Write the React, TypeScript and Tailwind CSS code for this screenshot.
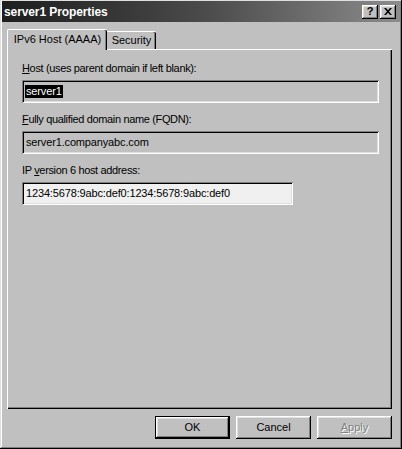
import React from "react";

const raised =
  "shadow-[inset_-1px_-1px_0_#000000,inset_1px_1px_0_#ffffff,inset_-2px_-2px_0_#808080,inset_2px_2px_0_#dfdfdf]";
const sunken =
  "shadow-[inset_1px_1px_0_#808080,inset_-1px_-1px_0_#ffffff,inset_2px_2px_0_#000000,inset_-2px_-2px_0_#dfdfdf]";

function Field({
  label,
  value,
  width,
  white,
  selected,
}: {
  label: React.ReactNode;
  value: string;
  width: string;
  white?: boolean;
  selected?: boolean;
}) {
  return (
    <div className="flex flex-col">
      <div className="h-[13px] leading-[13px] text-[11px] tracking-[-0.35px] text-black">{label}</div>
      <div
        className={`mt-[5px] h-[23px] ${width} ${sunken} ${
          white ? "bg-[#f0f0f0]" : "bg-[#c0c0c0]"
        } flex items-center pl-[3px]`}
      >
        <span
          className={`h-[13px] leading-[13px] text-[11px] tracking-[-0.15px] px-[1px] ${
            selected ? "bg-black text-white" : "text-black"
          }`}
        >
          {value}
        </span>
      </div>
    </div>
  );
}

export default function App() {
  return (
    <div
      className="w-[402px] h-[449px] bg-[#c0c0c0] flex flex-col shadow-[inset_-1px_-1px_0_#000000,inset_1px_1px_0_#dfdfdf,inset_-2px_-2px_0_#808080,inset_2px_2px_0_#ffffff]"
      style={{ fontFamily: '"Liberation Sans", Arial, sans-serif' }}
    >
      {/* Title bar */}
      <div className="mx-[2px] mt-[1px] h-[21px] flex items-center justify-between pl-[2px] pr-[4px] bg-gradient-to-r from-[#1e1e1e] via-[#4a4a4a] to-[#8c8c8c]">
        <span className="text-white font-bold text-[12px] leading-[14px] tracking-[-0.1px]">
          server1 Properties
        </span>
        <div className="flex gap-[2px]">
          <div
            className={`w-[16px] h-[14px] bg-[#c0c0c0] ${raised} flex items-center justify-center text-[11px] font-bold leading-none text-black`}
          >
            ?
          </div>
          <div
            className={`w-[16px] h-[14px] bg-[#c0c0c0] ${raised} flex items-center justify-center`}
          >
            <svg width="8" height="7" viewBox="0 0 8 7">
              <path d="M0 0h2l2 2.2L6 0h2L5 3.5 8 7H6L4 4.8 2 7H0l3-3.5z" fill="#000" />
            </svg>
          </div>
        </div>
      </div>

      {/* Body */}
      <div className="pl-[7px] pt-[6px] flex flex-col">
        {/* Tabs */}
        <div className="flex items-end h-[21px] relative z-10">
          <div className="h-[21px] w-[100px] bg-[#c0c0c0] border-l border-t border-white rounded-tl-[2px] rounded-tr-[2px] shadow-[inset_-1px_0_0_#000000,inset_-2px_0_0_#808080] flex items-center justify-center text-[11px] text-black -mb-[1px] pb-[1px]">
            IPv6 Host (AAAA)
          </div>
          <div className="h-[18px] w-[49px] bg-[#c0c0c0] border-t border-white rounded-tr-[2px] shadow-[inset_-1px_0_0_#000000,inset_-2px_0_0_#808080] flex items-center justify-center text-[11px] text-black">
            Security
          </div>
        </div>
        {/* Panel */}
        <div className="w-[385px] h-[360px] bg-[#c0c0c0] border-l border-t border-white shadow-[inset_-1px_-1px_0_#000000,inset_-2px_-2px_0_#808080] pl-[14px] pt-[12px] flex flex-col gap-[10px]">
          <Field
            label={
              <>
                <span className="underline">H</span>ost (uses parent domain if left blank):
              </>
            }
            value="server1"
            width="w-[357px]"
            selected
          />
          <Field
            label={
              <>
                <span className="underline">F</span>ully qualified domain name (FQDN):
              </>
            }
            value="server1.companyabc.com"
            width="w-[357px]"
          />
          <Field
            label={
              <>
                IP <span className="underline">v</span>ersion 6 host address:
              </>
            }
            value="1234:5678:9abc:def0:1234:5678:9abc:def0"
            width="w-[271px]"
            white
          />
        </div>
        {/* Buttons */}
        <div className="flex justify-end gap-[6px] w-[385px] mt-[7px]">
          <div
            className={`w-[75px] h-[23px] bg-[#c0c0c0] border border-black ${raised} flex items-center justify-center text-[11px] text-black`}
          >
            OK
          </div>
          <div
            className={`w-[75px] h-[23px] bg-[#c0c0c0] ${raised} flex items-center justify-center text-[11px] text-black`}
          >
            Cancel
          </div>
          <div
            className={`w-[75px] h-[23px] bg-[#c0c0c0] ${raised} flex items-center justify-center text-[11px] text-[#808080] [text-shadow:1px_1px_0_#ffffff]`}
          >
            <span>
              <span className="underline">A</span>pply
            </span>
          </div>
        </div>
      </div>
    </div>
  );
}
